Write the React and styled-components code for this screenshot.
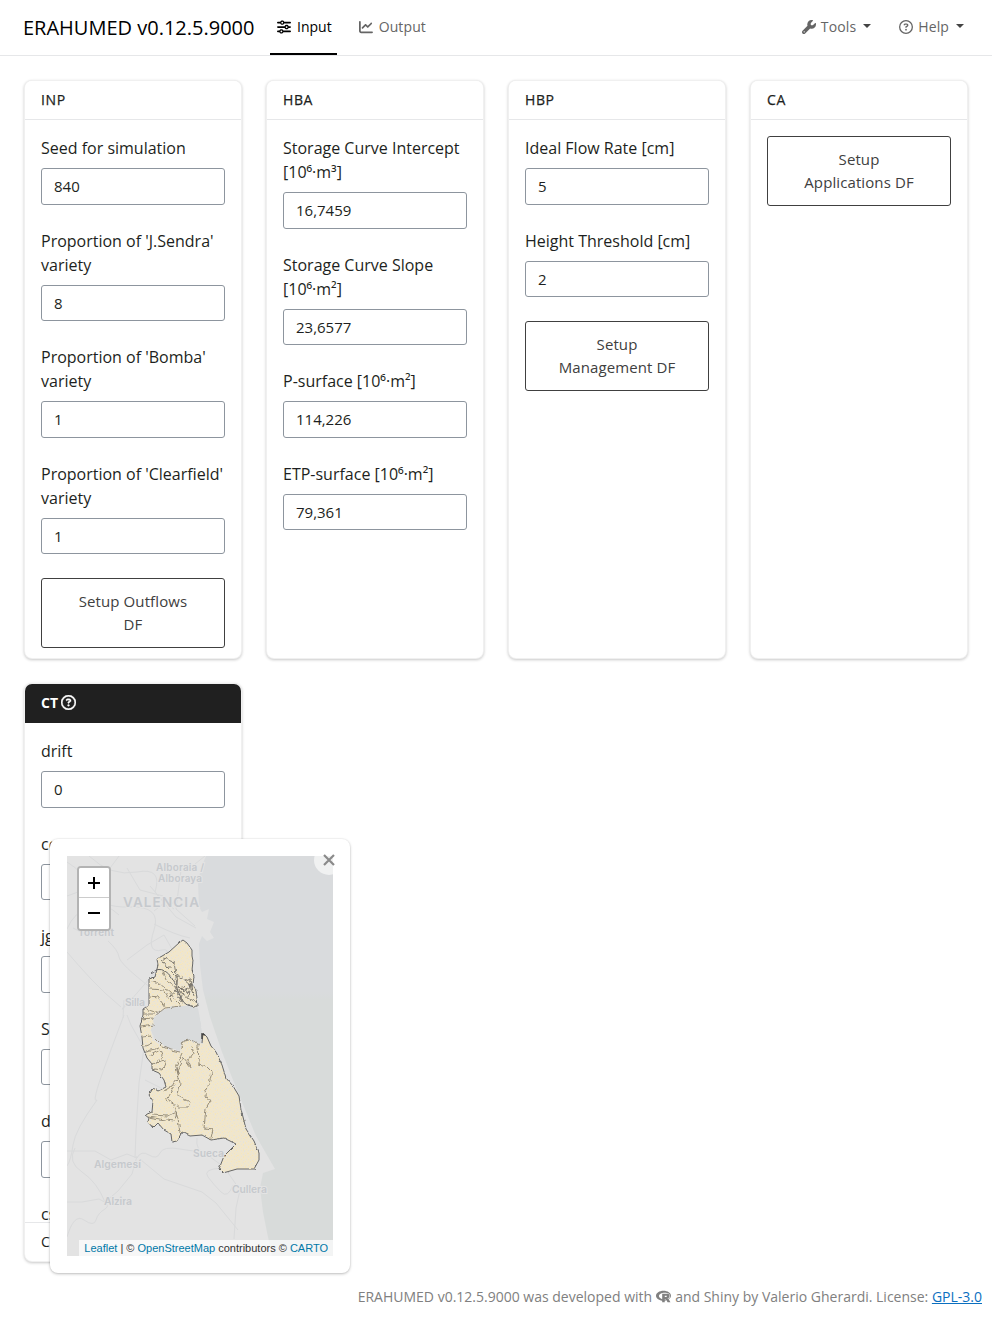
import React from "react";
import styled, { createGlobalStyle } from "styled-components";
import { FaSliders, FaChartLine, FaWrench, FaRegCircleQuestion, FaRProject } from "react-icons/fa6";

const GlobalStyle = createGlobalStyle`
  *, *::before, *::after { box-sizing: border-box; }
  html, body, #root { height: 100%; }
  body {
    margin: 0;
    background: #fff;
    color: #1d1f21;
    font: 400 16px/1.5 "Open Sans", sans-serif;
    overflow: hidden;
  }
`;

const Page = styled.div`
  position: relative;
  display: flex;
  flex-direction: column;
  height: 1323px;
`;

const Navbar = styled.nav`
  display: flex;
  align-items: center;
  height: 56px;
  flex: none;
  padding: 0 22px 0 23px;
  border-bottom: 1px solid #e6e7e9;
`;

const Brand = styled.span`
  width: 231px;
  margin-right: 16px;
  font-size: 20px;
  line-height: 30px;
  color: #000;
  white-space: nowrap;
`;

const NavItem = styled.a`
  display: flex;
  align-items: center;
  align-self: stretch;
  gap: ${(p) => (p.$menu ? 5 : 6)}px;
  padding: 0 ${(p) => (p.$active ? 5 : 6)}px 0 ${(p) => (p.$active ? 7 : 6)}px;
  margin-right: ${(p) => p.$after ?? 0}px;
  font-size: 14px;
  letter-spacing: ${(p) => (p.$active ? 0 : 0.12)}px;
  color: ${(p) => (p.$active ? "#000" : "#656565")};
  border-bottom: 2px solid ${(p) => (p.$active ? "#000" : "transparent")};
  white-space: nowrap;
  svg { display: block; }
`;

const Spacer = styled.div`flex: 1;`;

const Caret = styled.i`
  margin: -2px 0 0 2px;
  border: 4px solid transparent;
  border-top-color: #444;
  border-bottom: 0;
`;

const Main = styled.main`
  display: grid;
  grid-template-columns: repeat(4, 218px);
  grid-auto-rows: 579px;
  gap: 24px;
  padding: 24px;
`;

const Card = styled.section`
  display: flex;
  flex-direction: column;
  overflow: hidden;
  background: #fff;
  border: 1px solid rgba(0, 0, 0, 0.06);
  border-radius: 8px;
  box-shadow: 0 1px 3px rgba(0, 0, 0, 0.22);
`;

const CardHeader = styled.header`
  display: flex;
  align-items: center;
  gap: 3px;
  flex: none;
  height: 39px;
  padding: 0 16px 2px;
  font-size: 14px;
  letter-spacing: ${(p) => (p.$dark ? 0 : 0.6)}px;
  font-weight: ${(p) => (p.$dark ? 700 : 500)};
  color: ${(p) => (p.$dark ? "#fff" : "#1d1f21")};
  background: ${(p) => (p.$dark ? "#202020" : "#fff")};
  border-bottom: 1px solid ${(p) => (p.$dark ? "#202020" : "#e6e7e9")};
  -webkit-text-stroke: ${(p) => (p.$dark ? 0 : 0.25)}px currentColor;
  svg { stroke: currentColor; stroke-width: 14px; margin-top: 1px; }
`;

const CardBody = styled.div`
  flex: 1;
  min-height: 0;
  padding: 16px 16px 0;
  overflow: hidden;
`;

const CardFooter = styled.footer`
  flex: none;
  height: 39px;
  padding: 8px 16px;
  font-size: 14px;
  border-top: 1px solid #e6e7e9;
`;

const Field = styled.label`
  display: flex;
  flex-direction: column;
  gap: 8px;
  margin-bottom: 24px;
`;

const TextInput = styled.input`
  width: 100%;
  height: 36.5px;
  padding: 6px 12px;
  font: 400 15px/22.5px "Open Sans", sans-serif;
  color: #1d1f21;
  background: #fff;
  border: 1px solid #8d959e;
  border-radius: 3px;
`;

const SetupButton = styled.button`
  display: block;
  width: 100%;
  padding: 11.25px 28px;
  font: 400 15px/22.5px "Open Sans", sans-serif;
  letter-spacing: 0.1px;
  color: #404040;
  background: #fff;
  border: 1px solid #404040;
  border-radius: 3px;
`;

const MapPanel = styled.aside`
  position: absolute;
  left: 50px;
  top: 839px;
  width: 300px;
  height: 434px;
  padding: 17px;
  background: #fff;
  border-radius: 8px;
  box-shadow: 0 1px 3px rgba(0, 0, 0, 0.25), 0 0 0 1px rgba(0, 0, 0, 0.025);
`;

const MapView = styled.div`
  position: relative;
  width: 266px;
  height: 400px;
  overflow: hidden;
  svg { display: block; }
`;

const CloseButton = styled.button`
  position: absolute;
  left: 264px;
  top: 6px;
  width: 30px;
  height: 30px;
  padding: 0;
  border: 0;
  border-radius: 50%;
  background: rgba(255, 255, 255, 0.6);
  svg { display: block; margin: auto; }
`;

const ZoomControl = styled.div`
  position: absolute;
  left: 10px;
  top: 10px;
  display: flex;
  flex-direction: column;
  width: 34px;
  border: 2px solid #b3b3b3;
  border-radius: 4px;
  background: #fff;
  overflow: hidden;
`;

const ZoomButton = styled.button`
  height: ${(p) => (p.$first ? 30 : 31)}px;
  padding: ${(p) => (p.$first ? 0 : "0 0 1px")};
  background: #fff;
  border: 0;
  border-bottom: ${(p) => (p.$first ? "1px solid #ccc" : "0")};
  svg { display: block; margin: auto; }
`;

const Attribution = styled.div`
  position: absolute;
  right: 0;
  bottom: 0;
  height: 16px;
  padding: 0 5px;
  font: 400 11px/16px "Liberation Sans", sans-serif;
  color: #333;
  background: rgba(255, 255, 255, 0.7);
  white-space: nowrap;
  a { color: #0078a8; }
`;

const Footer = styled.footer`
  display: flex;
  justify-content: flex-end;
  align-items: center;
  gap: 4px;
  height: 20px;
  flex: none;
  padding-right: 10px;
  font-size: 14px;
  color: #808080;
  a { color: #0b6fbf; text-decoration: underline; }
`;

const MapLabel = styled.text`
  font: 600 ${(p) => p.$size || 11}px Inter, "Open Sans", sans-serif;
  fill: #c6c9cd;
  stroke: #e4e4e4;
  stroke-width: 2px;
  paint-order: stroke;
`;

const areas = [
  { title: "INP", fields: [["Seed for simulation", "840"], ["Proportion of 'J.Sendra' variety", "8"], ["Proportion of 'Bomba' variety", "1"], ["Proportion of 'Clearfield' variety", "1"]], button: "Setup Outflows DF" },
  { title: "HBA", fields: [["Storage Curve Intercept [10⁶·m³]", "16,7459"], ["Storage Curve Slope [10⁶·m²]", "23,6577"], ["P-surface [10⁶·m²]", "114,226"], ["ETP-surface [10⁶·m²]", "79,361"]] },
  { title: "HBP", fields: [["Ideal Flow Rate [cm]", "5"], ["Height Threshold [cm]", "2"]], button: "Setup Management DF" },
  { title: "CA", fields: [], button: "Setup Applications DF" },
  { title: "CT", dark: true, fields: [["drift", "0"], ["cov", ""], ["jg", ""], ["S", ""], ["d", ""], ["cs", ""]], footer: "C" },
];

function MapDrawing() {
  return (
    <svg width="266" height="400" viewBox="67 856 266 400">
      <defs>
        <filter id="rough" x="-5%" y="-5%" width="110%" height="110%">
          <feTurbulence type="fractalNoise" baseFrequency="0.22" numOctaves="2" seed="4" result="n" />
          <feDisplacementMap in="SourceGraphic" in2="n" scale="5" xChannelSelector="R" yChannelSelector="G" />
        </filter>
        <filter id="edge" x="-5%" y="-5%" width="110%" height="110%">
          <feTurbulence type="fractalNoise" baseFrequency="0.25" numOctaves="1" seed="9" result="n" />
          <feDisplacementMap in="SourceGraphic" in2="n" scale="3" xChannelSelector="R" yChannelSelector="G" />
        </filter>
        <linearGradient id="sea" x1="0" y1="0" x2="0" y2="1">
          <stop offset="0" stopColor="#d9dbdd" />
          <stop offset=".34" stopColor="#d9dbdd" />
          <stop offset=".36" stopColor="#d8dbda" />
          <stop offset="1" stopColor="#d8dbda" />
        </linearGradient>
        <pattern id="fields" width="7" height="6" patternUnits="userSpaceOnUse">
          <rect width="7" height="6" fill="#f0e6cc" />
          <path d="M1 1.5h1M5 2.5h1M3 4.5h1M6 5.5h1" stroke="#e6e3da" />
          <path d="M3 1.5h1M0 3.5h1M5 4.5h1" stroke="#f6e6bc" />
        </pattern>
      </defs>
      <rect x="67" y="856" width="266" height="400" fill="url(#sea)" />
      <path d="M67 856H206L201 868L198 882L199 907L202 912L209 909L207 919L214 922L210 932L214 938L207 941L202 936L199 944L200 965L203 990L210 1017L222 1052L237 1090L256 1136L275 1169L263 1173L260 1188L263 1212L267 1232L272 1256H67Z" fill="#e3e3e3" />
      <g fill="none" stroke="#d9dadb" strokeWidth="1" strokeLinejoin="round">
        <path d="M67 862Q84 872 91 890T130 907T154 930T162 950T144 985T129 1000M89 856Q111 877 137 872T155 892L176 917L196 928M67 896Q99 888 119 856M119 915Q106 902 90 907T67 929M67 952Q78 965 91 979T121 1007M108 941Q118 950 119 957T151 988M113 930Q91 940 73 928M124 1015Q119 1028 105 1066T97 1100Q75 1130 73 1145T67 1166M127 1015L131 1025L144 1048L139 1083L136 1131L135 1158M124 1000L123 1018M141 1160L164 1179L202 1192L216 1203L238 1230M67 1151L95 1151L111 1160L127 1154L137 1158Q141 1150 149 1155T160 1153T180 1149T205 1151M75 1148Q67 1162 82 1172T105 1202L118 1191L132 1174L137 1156M67 1202H82L99 1199Q112 1205 105 1209T96 1220T84 1220T67 1237M197 1138Q195 1150 206 1154L224 1167L240 1190L236 1208L234 1239M222 1168Q202 1169 208 1177T221 1192T233 1185" />
        <path d="M176 956L164 935L147 945L127 960M145 1080L163 1089M150 886L163 901L174 909M181 870L176 909L195 926M195 864L205 856M127 868L140 890L163 896M154 911L168 900L178 907M154 924Q175 935 190 938" />
      </g>
      <MapLabel x="156" y="871" $size={10} textLength="48">Alboraia /</MapLabel>
      <MapLabel x="158" y="881.5" $size={10} textLength="44">Alboraya</MapLabel>
      <MapLabel x="123" y="907" $size={13.5} textLength="76">VALENCIA</MapLabel>
      <MapLabel x="78" y="936" $size={10} textLength="36">Torrent</MapLabel>
      <MapLabel x="125" y="1006" $size={10.5} textLength="20">Silla</MapLabel>
      <MapLabel x="94" y="1168" $size={10.5} textLength="47">Algemesí</MapLabel>
      <MapLabel x="104" y="1205" $size={10.5} textLength="28">Alzira</MapLabel>
      <MapLabel x="232" y="1193" $size={10.5} textLength="35">Cullera</MapLabel>
      <g filter="url(#edge)">
        <path d="M180 942L183 940L187 943L192 950L192 956L193 961L192 970L194 976L193 985L196 991L198 1005L194 1008L188 1005L181 1006L174 1007L165 1008L157 1012L154 1021L151 1031L153 1040L162 1046L171 1050L180 1052L183 1041L190 1040L200 1045L203 1033L207 1037L211 1046L216 1052L222 1065L226 1078L233 1086L239 1096L241 1109L246 1129L254 1141L259 1153L259 1160L254 1169L237 1169L223 1173L219 1169L224 1156L236 1144L224 1138L211 1140L202 1135L190 1136L182 1132L177 1141L172 1142L171 1134L164 1130L158 1123L153 1128L148 1122L149 1118L145 1115L152 1112L153 1101L149 1095L153 1088L158 1091L166 1087L164 1080L159 1073L152 1070L152 1064L147 1058L143 1048L142 1037L140 1026L143 1015L143 1009L149 1005L149 979L155 977L158 965L157 959L169 952Z" fill="url(#fields)" />
        <path d="M154 1018L163 1010L172 1006H188L198 1008L201 1024L203 1044L190 1040L182 1042L180 1051L165 1047L154 1038L151 1030Z" fill="#d9dbdc" />
        <g fill="none" stroke="#666" strokeWidth="1" strokeLinejoin="round">
          <path d="M143 1009L149 1005L149 979L155 977L158 965L157 959L169 952L180 942L183 940L187 943L192 950L192 956L193 961L192 970L194 976L193 985L196 991L198 1005L194 1007L188 1005" />
          <path d="M202 1043L203 1033L207 1037L211 1046L216 1052L222 1065L226 1078L233 1086L239 1096L241 1109L246 1129L254 1141L259 1153L259 1160L254 1169L237 1169L223 1173L219 1169L224 1156L236 1144L224 1138L211 1140L202 1135L190 1136L182 1132L177 1141L172 1142L171 1134L164 1130L158 1123L153 1128L148 1122L149 1118L145 1115L152 1112L153 1101L149 1095L153 1088L158 1091L166 1087L164 1080L159 1073L152 1070L152 1064L147 1058L143 1048L142 1037L140 1026L143 1015L143 1009" />
          <path d="M151 973Q158 967 165 971T178 991T190 1005" />
        </g>
      </g>
      <g fill="none" stroke="#8d8572" strokeWidth=".9" filter="url(#rough)">
        <path d="M181 1049L183 1041L190 1040L200 1045M154 1038L162 1046L171 1050L180 1052M155 1016L165 1008L181 1006" />
        <path d="M163 971L168 982L180 990L190 1001M151 980L160 984L170 992L175 1000L180 1005M150 989L164 990L171 1002M149 996L158 997L165 1007M145 1009L153 1011L158 1013M142 1014H155M141 1019L153 1018M141 1027L154 1025M143 1037L151 1036M145 1046L153 1043M146 1051L160 1048M149 1056L160 1050L163 1057L156 1062M152 1064L165 1061L163 1070L154 1069M182 1053L176 1067L179 1076L172 1086L164 1091M192 1046L194 1053L188 1060L192 1069L183 1058M198 1045L199 1064L206 1066L212 1072L209 1084L204 1093L210 1101L206 1108L204 1128L213 1129L211 1138M184 1057L177 1070L180 1083L178 1096L190 1102L188 1107L179 1107L166 1100L175 1085M174 1106L178 1119L180 1133M151 1115L168 1116L177 1112L174 1121L160 1119L148 1117" />
        <path d="M161 961L166 957L169 961L174 963L176 974L184 979L190 984L194 996M166 966L176 976L177 988L183 987L188 993M176 988L179 994L183 992L181 1000M163 962L167 967L172 967M173 979L178 976L177 984L184 991L189 988L188 998L196 1002M170 996L176 991L182 1003M184 981L190 978L191 990" stroke="#77736a" />
      </g>
      <path d="M202 1039L202 1034L205 1035" fill="none" stroke="#444" strokeWidth="1.5" />
      <MapLabel x="193" y="1157" $size={10.5} textLength="31">Sueca</MapLabel>
    </svg>
  );
}

export default function App() {
  return (
    <Page>
      <GlobalStyle />
      <Navbar>
        <Brand>ERAHUMED v0.12.5.9000</Brand>
        <NavItem $active $after={16}><FaSliders size={14} />Input</NavItem>
        <NavItem><FaChartLine size={14} />Output</NavItem>
        <Spacer />
        <NavItem $menu $after={16}><FaWrench size={14} />Tools <Caret /></NavItem>
        <NavItem $menu><FaRegCircleQuestion size={14} />Help <Caret /></NavItem>
      </Navbar>
      <Main>
        {areas.map((a) => (
          <Card key={a.title}>
            <CardHeader $dark={a.dark}>{a.title}{a.dark && <FaRegCircleQuestion size={15} />}</CardHeader>
            <CardBody>
              {a.fields.map(([label, value]) => (
                <Field key={label}>{label}<TextInput defaultValue={value} /></Field>
              ))}
              {a.button && <SetupButton>{a.button}</SetupButton>}
            </CardBody>
            {a.footer && <CardFooter>{a.footer}</CardFooter>}
          </Card>
        ))}
      </Main>
      <Footer>
        <span>ERAHUMED v0.12.5.9000 was developed with</span>
        <FaRProject size={15} />
        <span>and Shiny by Valerio Gherardi. License: <a>GPL-3.0</a></span>
      </Footer>
      <MapPanel>
        <MapView>
          <MapDrawing />
          <ZoomControl>
            <ZoomButton $first aria-label="Zoom in"><svg width="12" height="12"><path d="M6 0V12M0 6H12" stroke="#000" strokeWidth="2" /></svg></ZoomButton>
            <ZoomButton aria-label="Zoom out"><svg width="12" height="12"><path d="M0 6H12" stroke="#000" strokeWidth="2" /></svg></ZoomButton>
          </ZoomControl>
          <Attribution><a>Leaflet</a> | © <a>OpenStreetMap</a> contributors © <a>CARTO</a></Attribution>
        </MapView>
        <CloseButton aria-label="Close"><svg width="12" height="12"><path d="M1 1L11 11M11 1L1 11" stroke="#8a8a8a" strokeWidth="2.2" /></svg></CloseButton>
      </MapPanel>
    </Page>
  );
}
